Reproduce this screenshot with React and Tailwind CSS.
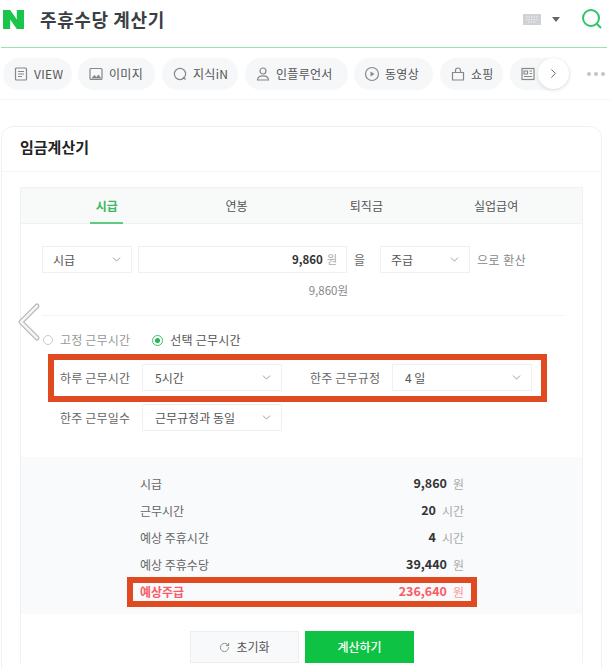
import React from "react";
import { ChevronDown, ChevronRight, RotateCw } from "lucide-react";

const Icon = ({ children }) => (
  <svg width="16" height="16" viewBox="0 0 16 16" fill="none" stroke="#888" strokeWidth="1.2" className="shrink-0">{children}</svg>
);

const chips = [
  { w: "w-[69px]", ml: "ml-[3px]", t: "VIEW", i: <><rect x="2.5" y="2" width="11" height="12" rx="1" /><path d="M5 5.5h6M5 8h6M5 10.5h4" /></> },
  { w: "w-[77px]", ml: "ml-[6px]", t: "이미지", i: <><rect x="2" y="2.5" width="12" height="11" rx="1" /><path d="M3 12.5l3.5-3.5 2 2 2-2.5 3 4z" fill="#888" stroke="none" /></> },
  { w: "w-[76px]", ml: "ml-[7px]", t: "지식iN", i: <><circle cx="8" cy="8" r="5.6" /><path d="M11 11l2.5 2.5" /></> },
  { w: "w-[103px]", ml: "ml-[7px]", t: "인플루언서", i: <><circle cx="8" cy="5" r="3" /><path d="M2.5 14c0-3 2.5-4.2 5.5-4.2s5.500 1.200 5.500 4.200z" /></> },
  { w: "w-[79px]", ml: "ml-[6px]", t: "동영상", i: <><circle cx="8" cy="8" r="6.500" /><path d="M6.500 5.500l4 2.500-4 2.500z" fill="#888" stroke="none" /></> },
  { w: "w-[63px]", ml: "ml-[7px]", t: "쇼핑", i: <><path d="M2.500 6.500h11v7.500h-11z" /><path d="M5.500 6.500V4.500a2.500 2.500 0 015 0v2" /></> },
  { w: "w-[60px]", ml: "ml-[7px]", t: "", i: <><rect x="2" y="2.500" width="12" height="11" /><path d="M4 5h3.500v3H4zM9.500 5H12M9.500 7.500H12M4 10.500h8" /></> },
];

const Select = ({ w = "w-[140px]", children, cls = "text-[#555]", pl = "pl-3" }) => (
  <div className={`${w} h-[27px] ${pl} pr-[8px] flex items-center justify-between border border-[#eef0f2] bg-white text-[12px] ${cls}`}>
    <span>{children}</span>
    <ChevronDown size={13} color="#888" strokeWidth={1.5} />
  </div>
);

const results = [
  ["시급", "9,860", "원"],
  ["근무시간", "20", "시간"],
  ["예상 주휴시간", "4", "시간"],
  ["예상 주휴수당", "39,440", "원"],
];

export default function App() {
  return (
    <div
      className="relative w-[612px] h-[668px] overflow-hidden bg-white text-[#333]"
      style={{ fontFamily: '"Noto Sans CJK KR", "Noto Sans", sans-serif' }}
    >
      {/* top bar */}
      <div className="h-[47px] flex items-center pl-[3px] pr-[5px] w-[607px] ml-[1px]">
        <svg width="21" height="19" viewBox="0 0 22 20" preserveAspectRatio="none" className="shrink-0 -mt-[9px] -ml-[1px]">
          <path d="M0 0h7.500l7 10V0H22v20h-7.500l-7-10v10H0z" fill="#19c54a" />
        </svg>
        <span className="ml-[16px] -mt-[9px] text-[18px] font-bold text-[#3a3f46] tracking-[0.6px]">주휴수당 계산기</span>
        <div className="ml-auto -mt-[9px] flex items-center">
          <svg width="18" height="11" viewBox="0 0 18 11">
            <rect width="18" height="11" fill="#cfd2d4" />
            <path d="M3 3h12M3 5.500h12M5 8h8" stroke="#eee" strokeWidth="1" strokeDasharray="1.500 1" />
          </svg>
          <svg width="8" height="5" viewBox="0 0 8 5" className="ml-[11px]"><path d="M0 0h8L4 5z" fill="#666" /></svg>
          <svg width="22" height="22" viewBox="0 0 22 22" fill="none" stroke="#2fc468" strokeWidth="2" className="ml-[21px]">
            <circle cx="10" cy="10" r="8" />
            <path d="M15.500 15.500L20 20" />
          </svg>
        </div>
      </div>
      <div className="h-px w-[606px] ml-[1px] bg-[#97e3aa]" />

      {/* chips */}
      <div className="relative h-[52px] pt-[10px] border-b border-[#f7f7f7] flex items-start">
        {chips.map((c) => (
          <div key={c.t + c.w} className={`${c.w} ${c.ml} shrink-0 h-[32px] rounded-full bg-[#f6f7f8] flex items-center pl-[10px] text-[12px] text-[#555] gap-[5px] tracking-[0.3px]`}>
            <Icon>{c.i}</Icon>
            {c.t && <span>{c.t}</span>}
          </div>
        ))}
        <div className="absolute left-[538px] top-[10px] w-[31px] h-[31px] rounded-full bg-white shadow-[0_1px_4px_rgba(0,0,0,0.12)] flex items-center justify-center">
          <ChevronRight size={15} color="#666" strokeWidth={1.6} />
        </div>
        <div className="absolute left-[587px] top-[24px] flex gap-[3px]">
          <span className="w-[4px] h-[4px] rounded-full bg-[#c4c4c4]" />
          <span className="w-[4px] h-[4px] rounded-full bg-[#c4c4c4]" />
          <span className="w-[4px] h-[4px] rounded-full bg-[#c4c4c4]" />
        </div>
      </div>

      {/* card */}
      <div className="mt-[26px] ml-[1px] w-[601px] rounded-t-[12px] border border-[#f0f1f2] h-[560px]">
        <div className="h-[45px] border-b border-[#f5f6f7] pl-[18px] flex items-center">
          <span className="text-[15px] font-bold text-[#222] -mt-[3px]">임금계산기</span>
        </div>
        <div className="mt-[15px] ml-[18px] w-[563px] border-x border-t border-[#f0f1f3]">
          {/* tabs */}
          <div className="h-[36px] px-[21px] grid grid-cols-4 bg-[#f8fafa] border-b border-[#eff1f2] text-[12px] text-[#555] text-center">
            <div className="relative flex items-center justify-center font-bold text-[#3bb964]">
              시급
              <span className="absolute bottom-[-1px] left-[48px] w-[33px] h-[2px] bg-[#5dcb80]" />
            </div>
            <div className="flex items-center justify-center">연봉</div>
            <div className="flex items-center justify-center">퇴직금</div>
            <div className="flex items-center justify-center">실업급여</div>
          </div>

          {/* converter */}
          <div className="mt-[22px] ml-[21px] flex items-center text-[12px] text-[#666]">
            <Select w="w-[90px]" pl="pl-[10px]">시급</Select>
            <div className="ml-[6px] w-[209px] h-[27px] border border-[#eef0f2] flex items-center justify-end pr-[9px]">
              <span className="font-bold text-[#333] text-[11.5px]">9,860</span>
              <span className="ml-[4px] text-[#aaa] text-[11px]">원</span>
            </div>
            <span className="ml-[7px] text-[#666]">을</span>
            <div className="ml-[15px]">
              <Select w="w-[90px]" pl="pl-[10px]">주급</Select>
            </div>
            <span className="ml-[7px] text-[#888] tracking-[0.5px]">으로 환산</span>
          </div>
          <div className="mt-[9px] ml-[21px] w-[306px] text-right text-[11.5px] leading-[17px] text-[#888]">9,860원</div>
          <div className="mt-[16px] ml-[21px] w-[522px] h-px bg-[#f3f4f5]" />

          {/* radio */}
          <div className="mt-[15px] ml-[22px] h-[18px] flex items-center text-[12px]">
            <span className="w-[10px] h-[10px] rounded-full border border-[#ccc] bg-white" />
            <span className="ml-[7px] text-[#999] tracking-[0.2px]">고정 근무시간</span>
            <span className="ml-[22px] w-[11px] h-[11px] rounded-full border border-[#3ac26b] flex items-center justify-center">
              <span className="w-[5px] h-[5px] rounded-full bg-[#22b655]" />
            </span>
            <span className="ml-[7px] text-[#555] tracking-[0.2px]">선택 근무시간</span>
          </div>

          <div className="mt-[15px] ml-[39px] flex items-center text-[12px] text-[#666]">
            <span className="w-[82px] tracking-[0.2px]">하루 근무시간</span>
            <Select>5시간</Select>
            <span className="ml-[28px] w-[82px] tracking-[0.2px]">한주 근무규정</span>
            <Select>4 일</Select>
          </div>
          <div className="mt-[13px] ml-[39px] flex items-center text-[12px] text-[#666]">
            <span className="w-[82px] tracking-[0.2px]">한주 근무일수</span>
            <Select>근무규정과 동일</Select>
          </div>

          {/* results */}
          <div className="mt-[26px] h-[157px] bg-[#f9fafb] pt-[13px] pl-[119px] pr-[118px]">
            {results.map(([l, v, u]) => (
              <div key={l} className="h-[27px] flex items-center justify-between text-[12px]">
                <span className="text-[#666]">{l}</span>
                <span className="flex items-center">
                  <span className="font-bold text-[12.5px] text-[#333]">{v}</span>
                  <span className="ml-[6px] text-[#aaa]">{u}</span>
                </span>
              </div>
            ))}
            <div className="h-[27px] flex items-center justify-between text-[12px] text-[#fb5a66]">
              <span className="font-bold">예상주급</span>
              <span className="flex items-center">
                <span className="font-bold text-[12.5px]">236,640</span>
                <span className="ml-[6px] text-[#f99]">원</span>
              </span>
            </div>
          </div>

          {/* buttons */}
          <div className="mt-[17px] flex justify-center gap-[6px] ml-[1px]">
            <div className="w-[109px] h-[32px] bg-[#f8f9fa] border border-[#eceef0] flex items-center justify-center text-[12px] text-[#555] gap-[6px]">
              <RotateCw size={11} color="#888" />
              초기화
            </div>
            <div className="w-[109px] h-[32px] bg-[#0ec343] flex items-center justify-center text-[12px] font-medium text-white">계산하기</div>
          </div>
        </div>
      </div>

      {/* annotations */}
      <div className="absolute left-[48px] top-[354px] w-[499px] h-[48px] border-[6px] border-[#e04a20]" />
      <div className="absolute left-[127px] top-[577px] w-[350px] h-[30px] border-[6px] border-[#e04a20]" />
      <svg width="26" height="40" viewBox="0 0 26 40" fill="none" className="absolute left-[16px] top-[302px]">
        <path d="M21 4L5 20l16 16" stroke="#b8b8b8" strokeWidth="5" strokeLinejoin="round" strokeLinecap="round" />
        <path d="M21 4L5 20l16 16" stroke="#f4f4f4" strokeWidth="2.500" strokeLinejoin="round" strokeLinecap="round" />
      </svg>
    </div>
  );
}
